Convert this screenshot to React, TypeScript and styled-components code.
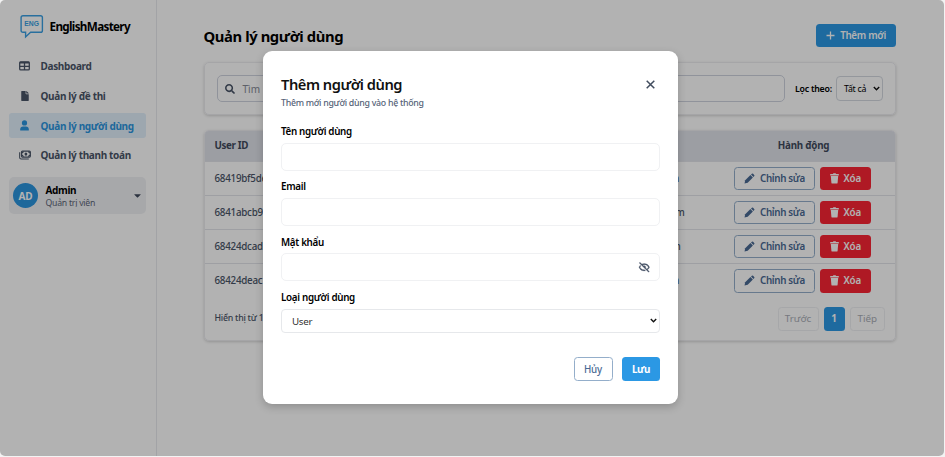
import React from "react";
import styled, { createGlobalStyle, css } from "styled-components";
import { FaFile, FaCaretDown, FaSearch } from "react-icons/fa";
import { BiHide } from "react-icons/bi";

const GlobalStyle = createGlobalStyle`
  * { box-sizing: border-box; }
  html, body { margin: 0; padding: 0; background: #f3f3f3; overflow: hidden; }
  body { font-family: "Noto Sans", "Open Sans", sans-serif; color: #000; }
  button, input { font-family: inherit; }
`;

const Frame = styled.div`
  position: relative;
  width: 943.5px;
  height: 455.5px;
  border-radius: 5px;
  overflow: hidden;
  background: #fff;
`;

const Shell = styled.div`
  display: flex;
  height: 100%;
`;

const Label = styled.span<{ $size: number; $weight?: number; $color?: string; $spacing?: number; $drop?: number }>`
  padding-top: ${(p) => p.$drop ?? 0}px;
  font-size: ${(p) => p.$size}px;
  font-weight: ${(p) => p.$weight ?? 400};
  color: ${(p) => p.$color ?? "inherit"};
  letter-spacing: ${(p) => p.$spacing ?? 0}px;
  line-height: 1.3;
  white-space: nowrap;
`;

/* Sidebar */
const Sidebar = styled.aside`
  flex: none;
  width: 156.5px;
  padding: 13px 10px 0 8.5px;
  border-right: 1px solid #e9eaee;
`;

const Brand = styled.div`
  display: flex;
  align-items: center;
  height: 26px;
  padding-left: 11px;
  gap: 6px;
`;

const Nav = styled.nav`
  display: flex;
  flex-direction: column;
  gap: 4.8px;
  margin-top: 14.5px;
`;

const NavItem = styled.a<{ $active?: boolean }>`
  display: flex;
  align-items: center;
  height: 25px;
  padding-left: 10px;
  gap: 10px;
  border-radius: 3px;
  color: ${(p) => (p.$active ? "#2b95df" : "#4a5568")};
  background: ${(p) => (p.$active ? "#e1effb" : "transparent")};
`;

const NavIcon = styled.span`
  display: flex;
  justify-content: center;
  flex: none;
  width: 12px;
`;

const Profile = styled.div`
  display: flex;
  align-items: center;
  height: 37px;
  margin-top: 9.5px;
  padding: 0 3px 0 4.5px;
  border-radius: 5px;
  background: #f0f1f4;
`;

const Avatar = styled.div`
  display: grid;
  place-items: center;
  width: 25px;
  height: 25px;
  border-radius: 50%;
  background: #2b95df;
  color: #fff;
`;

const ProfileText = styled.div`
  display: flex;
  flex-direction: column;
  flex: 1;
  padding-left: 7.5px;
`;

/* Main area */
const Main = styled.main`
  flex: 1;
  padding: 23.5px 47.5px 0 47px;
`;

const TitleBar = styled.header`
  display: flex;
  justify-content: space-between;
  align-items: center;
  height: 23.5px;
`;

const Button = styled.button<{ $kind: "primary" | "danger" | "outline" | "muted"; $width: number }>`
  display: flex;
  align-items: center;
  justify-content: center;
  gap: 5px;
  width: ${(p) => p.$width}px;
  height: 23.5px;
  padding: 0;
  border: 0;
  border-radius: 3.5px;
  ${(p) => p.$kind === "primary" && css`background: #2b98e4; color: #fff;`}
  ${(p) => p.$kind === "danger" && css`background: #fb2534; color: #fff;`}
  ${(p) => p.$kind === "outline" && css`background: #fff; color: #4a6a94; border: 1px solid #94aeca;`}
  ${(p) => p.$kind === "muted" && css`background: transparent; color: #a9adb6; border: 1px solid #eeeff2;`}
`;

const Card = styled.section`
  border: 1px solid #ececf0;
  border-radius: 5px;
  box-shadow: 0 1px 3px rgba(0, 0, 0, 0.18);
`;

const FilterCard = styled(Card)`
  display: flex;
  align-items: center;
  height: 53px;
  margin-top: 15px;
  padding: 0 12px;
`;

const SearchBox = styled.div`
  display: flex;
  align-items: center;
  gap: 8px;
  width: 568px;
  height: 26.5px;
  margin-right: 10.5px;
  padding-left: 7px;
  border: 1px solid #cfd3de;
  border-radius: 5px;
  color: #4a5568;
`;

const SmallSelect = styled.div`
  display: flex;
  align-items: center;
  justify-content: space-between;
  width: 47px;
  height: 24.5px;
  margin-left: auto;
  padding: 0 2px 0 7px;
  border: 1px solid #d4d8e0;
  border-radius: 4px;
`;

const TableCard = styled(Card)`
  height: 211.5px;
  margin-top: 14.5px;
  overflow: hidden;
`;

const Row = styled.div`
  display: grid;
  grid-template-columns: 190px 1fr 162px;
  align-items: center;
  height: 34.2px;
  padding: 0 10.5px 0 10px;
  color: #4a5568;
  & + & { border-top: 1px solid #e2e4ea; }
`;

const HeadRow = styled(Row)`
  height: 30.2px;
  background: #e0e2ea;
  color: #3f4a5c;
`;

const Email = styled.div<{ $inset: number }>`
  display: flex;
  justify-content: flex-end;
  padding-right: ${(p) => p.$inset}px;
`;

const Actions = styled.div`
  display: flex;
  gap: 4.5px;
  padding-left: 11.5px;
`;

const HeadAction = styled.div`
  display: flex;
  justify-content: center;
`;

const TableFoot = styled.footer`
  display: flex;
  align-items: center;
  justify-content: space-between;
  height: 43.4px;
  padding: 0 10px;
  color: #4a5568;
`;

const Pager = styled.div`
  display: flex;
  gap: 5px;
`;

/* Dialog */
const Overlay = styled.div`
  position: absolute;
  inset: 0;
  background: rgba(0, 0, 0, 0.3);
`;

const Dialog = styled.div`
  position: absolute;
  left: 263px;
  top: 50.5px;
  width: 415px;
  height: 353.5px;
  padding: 24px 18px 0;
  border-radius: 9px;
  background: #fff;
  box-shadow: 0 3px 9px rgba(0, 0, 0, 0.2);
`;

const DialogHead = styled.div`
  display: flex;
  justify-content: space-between;
  height: 49px;
`;

const HeadText = styled.div`
  display: flex;
  flex-direction: column;
  gap: 4px;
`;

const CloseIcon = styled.svg`
  width: 9px;
  height: 9px;
  margin: 5px 5.5px 0 0;
`;

const Field = styled.label`
  display: flex;
  flex-direction: column;
  height: 55.4px;
`;

const FieldLabel = styled.div`
  display: flex;
  align-items: center;
  height: 15px;
  margin-bottom: 4px;
`;

const Input = styled.div`
  display: flex;
  align-items: center;
  justify-content: flex-end;
  height: 28px;
  padding-right: 8.5px;
  border: 1px solid #f0f1f3;
  border-radius: 5px;
  color: #4a5568;
`;

const Select = styled.div`
  display: flex;
  align-items: center;
  justify-content: space-between;
  height: 23.5px;
  margin-top: 0.5px;
  padding: 0 2px 0 10px;
  border: 1px solid #e6e8eb;
  border-radius: 4px;
`;

const DialogFoot = styled.div`
  display: flex;
  justify-content: flex-end;
  gap: 9.5px;
  margin-top: 12px;
`;

const Chevron = () => (
  <svg width="7" height="5" viewBox="0 0 7 5" fill="none" stroke="#111" strokeWidth="1.4">
    <path d="M0.8 1 L3.5 3.7 L6.2 1" />
  </svg>
);

const LogoMark = () => (
  <svg width="24" height="25" viewBox="0 0 24 25" fill="none" stroke="#3a9fe2" strokeWidth="1.4">
    <path d="M3 1.7 H20.5 Q22.4 1.7 22.4 3.6 V16.4 Q22.4 18.3 20.5 18.3 H10.6 L5.6 23 V18.3 H3 Q1.1 18.3 1.1 16.4 V3.6 Q1.1 1.7 3 1.7 Z" />
    <text x="11.7" y="12.2" textAnchor="middle" fontFamily="Liberation Sans" fontWeight="700" fontSize="6.8" fill="#3a9fe2" stroke="none">
      ENG
    </text>
  </svg>
);

const TableIcon = () => (
  <svg width="11" height="10" viewBox="0 0 11 10" fill="none" stroke="currentColor">
    <rect x="0.7" y="0.9" width="9.6" height="8" rx="1" strokeWidth="1.3" />
    <path d="M0.7 1.6 H10.3" strokeWidth="1.8" />
    <path d="M0.7 5.4 H10.3 M5.5 1.5 V9" strokeWidth="1.3" />
  </svg>
);

const PersonIcon = () => (
  <svg width="9" height="11" viewBox="0 0 9 11" fill="currentColor">
    <circle cx="4.5" cy="2.9" r="2.6" />
    <path d="M0.2 10.5 V9.6 Q0.2 6.5 3.2 6.5 H5.8 Q8.8 6.5 8.8 9.6 V10.5 Z" />
  </svg>
);

const BillsIcon = () => (
  <svg width="13" height="10" viewBox="0 0 13 10" fill="none" stroke="currentColor">
    <rect x="2.7" y="0.8" width="9.6" height="6.4" rx="1" strokeWidth="1.3" />
    <ellipse cx="7.5" cy="4" rx="1.5" ry="1.8" fill="currentColor" stroke="none" />
    <path d="M3.2 3 L4.9 1.2 M11.8 3 L10.1 1.2 M3.2 5 L4.9 6.8 M11.8 5 L10.1 6.8" strokeWidth="1.3" />
    <path d="M0.7 2 V7.6 Q0.7 9.3 2.3 9.3 H10.6" strokeWidth="1.1" />
  </svg>
);

const PencilIcon = () => (
  <svg width="11" height="11" viewBox="0 0 11 11" fill="currentColor">
    <path d="M0.5 10.5 L1.2 7.3 L6.4 2.1 L8.9 4.6 L3.7 9.8 Z" />
    <path d="M7 1.5 L7.9 0.7 Q8.5 0.2 9.1 0.8 L10.2 1.9 Q10.8 2.5 10.3 3.1 L9.5 4 Z" />
  </svg>
);

const TrashIcon = () => (
  <svg width="9" height="11" viewBox="0 0 9 11" fill="currentColor">
    <path d="M0.2 1 H2.9 L3.4 0.3 H5.6 L6.1 1 H8.8 V2.4 H0.2 Z" />
    <path d="M0.8 3 H8.2 L7.6 9.7 Q7.5 10.6 6.7 10.6 H2.3 Q1.5 10.6 1.4 9.7 Z" />
  </svg>
);

const PlusIcon = () => (
  <svg width="9" height="9" viewBox="0 0 9 9" stroke="currentColor" strokeWidth="1.3">
    <path d="M4.5 0.5 V8.5 M0.5 4.5 H8.5" />
  </svg>
);

const navItems = [
  { text: "Dashboard", icon: <TableIcon />, drop: 1 },
  { text: "Quản lý đề thi", icon: <FaFile size={10} />, drop: 2 },
  { text: "Quản lý người dùng", icon: <PersonIcon />, drop: 1, active: true },
  { text: "Quản lý thanh toán", icon: <BillsIcon />, drop: 1 },
];

const users = [
  { id: "68419bf5de", email: "admin@gmail.com", inset: 43.5 },
  { id: "6841abcb9", email: "hocvien@gmail.com", inset: 38 },
  { id: "68424dcad", email: "user@gmail.com", inset: 42 },
  { id: "68424deac", email: "test@gmail.com", inset: 43.5 },
];

export default function App() {
  return (
    <>
      <GlobalStyle />
      <Frame>
        <Shell>
          <Sidebar>
            <Brand>
              <LogoMark />
              <Label $size={11.7} $weight={700} $spacing={-0.67} $drop={2}>EnglishMastery</Label>
            </Brand>
            <Nav>
              {navItems.map((n) => (
                <NavItem key={n.text} $active={n.active}>
                  <NavIcon>{n.icon}</NavIcon>
                  <Label $size={10} $weight={700} $spacing={-0.33} $drop={n.drop}>{n.text}</Label>
                </NavItem>
              ))}
            </Nav>
            <Profile>
              <Avatar><Label $size={10} $weight={700} $drop={1}>AD</Label></Avatar>
              <ProfileText>
                <Label $size={10} $weight={700} $spacing={-0.35} $drop={2}>Admin</Label>
                <Label $size={8.7} $color="#5b6577" $spacing={-0.25} $drop={1}>Quản trị viên</Label>
              </ProfileText>
              <FaCaretDown size={11} color="#3f4a5c" />
            </Profile>
          </Sidebar>
          <Main>
            <TitleBar>
              <Label $size={14.8} $weight={700} $spacing={-0.4} $drop={2}>Quản lý người dùng</Label>
              <Button $kind="primary" $width={80}>
                <PlusIcon />
                <Label $size={9.8} $weight={600} $spacing={-0.3} $drop={3}>Thêm mới</Label>
              </Button>
            </TitleBar>
            <FilterCard>
              <SearchBox>
                <FaSearch size={10} />
                <Label $size={10} $color="#858a95" $drop={1}>Tìm</Label>
              </SearchBox>
              <Label $size={8.8} $weight={600} $spacing={-0.25} $drop={2}>Lọc theo:</Label>
              <SmallSelect>
                <Label $size={8.8} $spacing={-0.25} $drop={2}>Tất cả</Label>
                <Chevron />
              </SmallSelect>
            </FilterCard>
            <TableCard>
              <HeadRow>
                <Label $size={9.8} $weight={700} $spacing={-0.35} $drop={2}>User ID</Label>
                <span />
                <HeadAction><Label $size={9.8} $weight={700} $spacing={-0.25} $drop={2}>Hành động</Label></HeadAction>
              </HeadRow>
              {users.map((u) => (
                <Row key={u.id}>
                  <Label $size={9.8} $weight={500} $spacing={-0.25} $drop={1.5}>{u.id}</Label>
                  <Email $inset={u.inset}><Label $size={9.8} $weight={500} $spacing={-0.2} $drop={1.5}>{u.email}</Label></Email>
                  <Actions>
                    <Button $kind="outline" $width={81}>
                      <PencilIcon />
                      <Label $size={9.8} $weight={600} $spacing={-0.35} $drop={1.5}>Chỉnh sửa</Label>
                    </Button>
                    <Button $kind="danger" $width={51.5}>
                      <TrashIcon />
                      <Label $size={9.8} $weight={600} $spacing={-0.25} $drop={1.5}>Xóa</Label>
                    </Button>
                  </Actions>
                </Row>
              ))}
              <TableFoot>
                <Label $size={8.8} $weight={500} $spacing={-0.25}>Hiển thị từ 1</Label>
                <Pager>
                  <Button $kind="muted" $width={41}><Label $size={9.8} $drop={1}>Trước</Label></Button>
                  <Button $kind="primary" $width={21}><Label $size={9.8} $weight={700} $drop={1}>1</Label></Button>
                  <Button $kind="muted" $width={35.5}><Label $size={9.8} $drop={1}>Tiếp</Label></Button>
                </Pager>
              </TableFoot>
            </TableCard>
          </Main>
        </Shell>
        <Overlay />
        <Dialog>
          <DialogHead>
            <HeadText>
              <Label $size={14.7} $weight={600} $color="#111" $spacing={-0.48}>Thêm người dùng</Label>
              <Label $size={8.8} $weight={500} $color="#566378" $spacing={-0.28}>Thêm mới người dùng vào hệ thống</Label>
            </HeadText>
            <CloseIcon viewBox="0 0 9 9" stroke="#414c5e" strokeWidth="1.5" fill="none">
              <path d="M0.7 0.7 L8.3 8.3 M8.3 0.7 L0.7 8.3" />
            </CloseIcon>
          </DialogHead>
          <Field>
            <FieldLabel><Label $size={9.8} $weight={600} $spacing={-0.33} $drop={2}>Tên người dùng</Label></FieldLabel>
            <Input />
          </Field>
          <Field>
            <FieldLabel><Label $size={9.8} $weight={600} $spacing={-0.3} $drop={2}>Email</Label></FieldLabel>
            <Input />
          </Field>
          <Field>
            <FieldLabel><Label $size={9.8} $weight={600} $spacing={-0.3} $drop={3}>Mật khẩu</Label></FieldLabel>
            <Input><BiHide size={12.5} strokeWidth={0.5} /></Input>
          </Field>
          <Field>
            <FieldLabel><Label $size={9.8} $weight={600} $spacing={-0.3} $drop={2}>Loại người dùng</Label></FieldLabel>
            <Select>
              <Label $size={9.8} $color="#333" $spacing={-0.3} $drop={2}>User</Label>
              <Chevron />
            </Select>
          </Field>
          <DialogFoot>
            <Button $kind="outline" $width={39}><Label $size={9.8} $weight={500} $spacing={-0.15} $drop={3}>Hủy</Label></Button>
            <Button $kind="primary" $width={38}><Label $size={9.8} $weight={700} $spacing={-0.35} $drop={3}>Lưu</Label></Button>
          </DialogFoot>
        </Dialog>
      </Frame>
    </>
  );
}
